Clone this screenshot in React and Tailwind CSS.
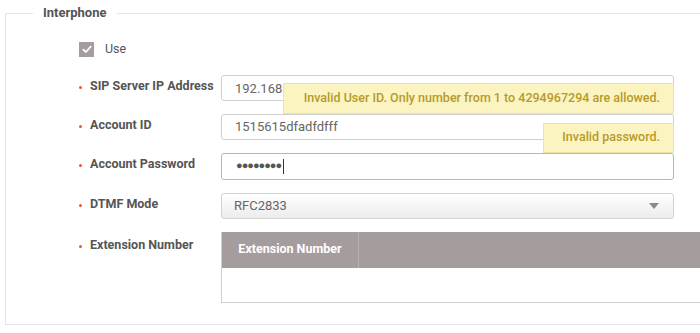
const font = { fontFamily: 'Roboto, "Liberation Sans", sans-serif' };

function Label({ children }) {
  return (
    <div className="flex items-center gap-[8px] text-[12.5px] font-bold text-[#555] h-[26px]">
      <span className="w-[3px] h-[3px] rounded-full bg-[#e8553e]" />
      <span className="leading-none -mt-[3px]">{children}</span>
    </div>
  );
}

function Tip({ children, className }) {
  return (
    <div
      className={
        'absolute right-0 h-[30px] flex items-center bg-[#fbf4c0] border border-[#efe4a2] text-[#b69a2c] text-[12.5px] font-medium whitespace-nowrap z-10 ' +
        className
      }
    >
      {children}
    </div>
  );
}

export default function App() {
  return (
    <div className="w-[700px] h-[333px] overflow-hidden bg-white" style={font}>
      <fieldset className="ml-[5px] mt-[5px] w-[760px] h-[320px] border border-[#e3e3e3]">
        <legend className="ml-[27px] px-[10px] text-[13px] font-bold text-[#555] leading-[16px]">Interphone</legend>

        <div className="pl-[73px]">
          <div className="flex items-center gap-[11px] mt-[19px]">
            <span className="w-[15px] h-[15px] bg-[#a59c9e] flex items-center justify-center">
              <svg width="10" height="9" viewBox="0 0 10 9" fill="none">
                <path d="M1.3 4.6 L3.9 7 L8.7 1.6" stroke="white" strokeWidth="1.8" strokeLinecap="round" strokeLinejoin="round" />
              </svg>
            </span>
            <span className="text-[12.5px] text-[#555]">Use</span>
          </div>

          <div className="grid grid-cols-[142px_453px] gap-y-[13px] mt-[16px]">
            <Label>SIP Server IP Address</Label>
            <div className="relative">
              <div className="h-[26px] border border-[#cfcfcf] rounded-[3px] flex items-center pl-[13px] text-[13px] text-[#666] overflow-hidden">
                <span className="mt-[2px]">192.168.1.100</span>
              </div>
              <Tip className="top-[8px] h-[31px] pl-[20px] pr-[13px]">Invalid User ID. Only number from 1 to 4294967294 are allowed.</Tip>
            </div>

            <Label>Account ID</Label>
            <div className="relative">
              <div className="h-[26px] border border-[#cfcfcf] rounded-[3px] flex items-center pl-[13px] text-[13px] text-[#666]">
                1515615dfadfdfff
              </div>
              <Tip className="top-[9px] pl-[18px] pr-[13px]">Invalid password.</Tip>
            </div>

            <Label>Account Password</Label>
            <div className="h-[27px] border border-[#7fd0c8] rounded-[3px] flex items-center pl-[14px] text-[13px] text-[#555]">
              <span className="tracking-[-1px] text-[11px]">●●●●●●●●</span>
              <span className="w-px h-[15px] bg-[#333] ml-[2px]" />
            </div>

            <Label>DTMF Mode</Label>
            <div className="h-[26px] border border-[#d2d2d2] rounded-[3px] flex items-center justify-between pl-[12px] pr-[14px] text-[13px] text-[#666] bg-gradient-to-b from-white to-[#ececec]">
              <span>RFC2833</span>
              <svg width="10" height="6" viewBox="0 0 10 6">
                <path d="M0 0 H10 L5 6 Z" fill="#8a8a8a" />
              </svg>
            </div>

            <div className="pt-[2px]">
              <Label>Extension Number</Label>
            </div>
            <div className="w-[520px] border-l border-b border-[#cfcfcf]">
              <div className="h-[36px] bg-[#a59c9e] flex">
                <div className="w-[137px] flex items-center justify-center text-white text-[12.5px] font-bold border-r border-[#b8b1b2]">
                  Extension Number
                </div>
                <div className="flex-1" />
              </div>
              <div className="h-[34px] bg-white" />
            </div>
          </div>
        </div>
      </fieldset>
    </div>
  );
}
